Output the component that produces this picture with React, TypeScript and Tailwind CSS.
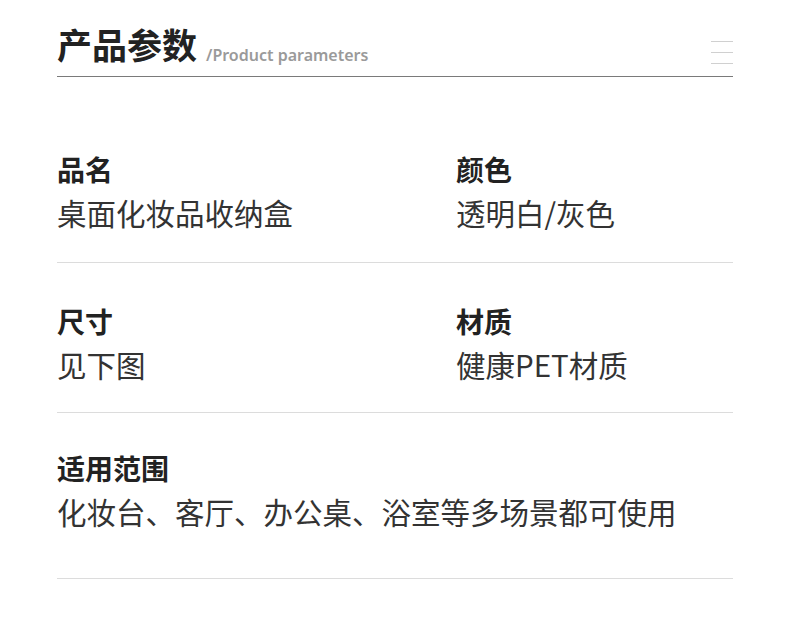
const cjk = "font-['Noto_Sans_CJK_SC','Noto_Sans',sans-serif]";

type Item = { label: string; value: string };

function Cell({ item }: { item: Item }) {
  return (
    <div className="flex flex-col">
      <div className="text-[28px] leading-[36px] font-bold text-[#222]">{item.label}</div>
      <div className="mt-[5px] text-[29.5px] leading-[40px] text-[#333]">{item.value}</div>
    </div>
  );
}

export default function App() {
  const rows: Item[][] = [
    [
      { label: "品名", value: "桌面化妆品收纳盒" },
      { label: "颜色", value: "透明白/灰色" },
    ],
    [
      { label: "尺寸", value: "见下图" },
      { label: "材质", value: "健康PET材质" },
    ],
  ];

  return (
    <div className={`w-[790px] h-[625px] bg-white ${cjk}`}>
      <div className="ml-[57px] w-[676px]">
        <div className="flex items-end justify-between pt-[22px] pb-[10px] border-b border-[#7a7a7a]">
          <div className="flex items-end">
            <h1 className="text-[35px] leading-[44px] font-bold text-[#222]">产品参数</h1>
            <span className="ml-[9px] mb-[1px] text-[16px] leading-[20px] font-semibold text-[#9a9a9a] font-['Noto_Sans',sans-serif]">
              /Product parameters
            </span>
          </div>
          <div className="flex flex-col gap-[10px] mb-[2px]">
            <div className="w-[22px] h-px bg-[#d0d0d0]" />
            <div className="w-[22px] h-px bg-[#d0d0d0]" />
            <div className="w-[22px] h-px bg-[#d0d0d0]" />
          </div>
        </div>

        <div className="grid grid-cols-[399px_1fr] border-b border-[#dcdcdc] pt-[74px] pb-[30px]">
          {rows[0].map((it) => (
            <Cell key={it.label} item={it} />
          ))}
        </div>
        <div className="grid grid-cols-[399px_1fr] border-b border-[#dcdcdc] pt-[40px] pb-[28px]">
          {rows[1].map((it) => (
            <Cell key={it.label} item={it} />
          ))}
        </div>

        <div className="border-b border-[#dcdcdc] pt-[37px] pb-[47px]">
          <Cell item={{ label: "适用范围", value: "化妆台、客厅、办公桌、浴室等多场景都可使用" }} />
        </div>
      </div>
    </div>
  );
}
